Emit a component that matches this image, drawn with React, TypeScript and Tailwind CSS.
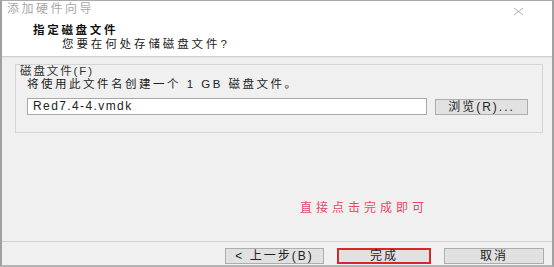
const font = { fontFamily: '"Liberation Sans", "Noto Sans CJK SC", sans-serif' };

const Btn = ({ label, className = "" }: { label: string; className?: string }) => (
  <button
    className={`h-[16px] bg-[#e1e1e1] border border-[#adadad] text-[12px] leading-[12px] tracking-[2px] text-[#222] flex items-center justify-center ${className}`}
  >
    {label}
  </button>
);

export default function App() {
  return (
    <div
      style={font}
      className="w-[554px] h-[267px] flex flex-col bg-[#f0f0f0] border-t border-l-2 border-r-2 border-b-2 border-t-[#a9a9a9] border-l-[#a0a0a0] border-r-[#a0a0a0] border-b-[#b4b4b4] overflow-hidden"
    >
      <div className="h-[56px] shrink-0 bg-white border-b border-[#cfcfcf] flex flex-col">
        <div className="flex justify-between items-start pl-[5px] pr-[28px] pt-[1px]">
          <span className="text-[12px] leading-[14px] tracking-[2.5px] text-[#a8a8a8]">添加硬件向导</span>
          <svg width="11" height="9" viewBox="0 0 11 9" className="mt-[5px]">
            <path d="M1 1 L10 8 M10 1 L1 8" stroke="#b0b0b0" strokeWidth="1" fill="none" />
          </svg>
        </div>
        <div className="pl-[31px] mt-[8px] text-[11.5px] leading-[13px] tracking-[2.7px] font-bold text-[#111]">
          指定磁盘文件
        </div>
        <div className="pl-[60px] mt-[1px] text-[11.5px] leading-[13px] tracking-[2.9px] text-[#222]">
          您要在何处存储磁盘文件?
        </div>
      </div>

      <div className="h-[184px] shrink-0 flex flex-col border-t border-[#e4e4e4]">
        <div className="ml-[13px] mt-[6px] w-[528px] h-[69px] border border-[#d5d5d5] flex flex-col">
          <div className="pl-[4px] text-[11.5px] leading-[12px] tracking-[1.9px] text-[#333]">磁盘文件(F)</div>
          <div className="pl-[11px] mt-[1px] text-[11.5px] leading-[12px] tracking-[2.5px] text-[#222]">
            将使用此文件名创建一个 1 GB 磁盘文件。
          </div>
          <div className="pl-[11px] mt-[8px] flex items-start gap-[8px]">
            <div className="w-[400px] h-[17px] bg-white border border-[#a8a8a8] pl-[5px] text-[12px] leading-[15px] tracking-[1.4px] text-[#222]">
              Red7.4-4.vmdk
            </div>
            <Btn label="浏览(R)..." className="w-[93px] mt-[1px]" />
          </div>
        </div>
        <div className="pl-[298px] mt-[68px] text-[12px] leading-[14px] tracking-[4px] text-[#e24a68]">
          直接点击完成即可
        </div>
      </div>

      <div className="flex-1 border-t border-[#d0d0d0] flex justify-end items-start pt-[6px] pr-[8px] gap-[13px]">
        <Btn label="< 上一步(B)" className="w-[99px]" />
        <Btn label="完成" className="w-[94px] border-2 border-[#d8262c]" />
        <Btn label="取消" className="w-[100px]" />
      </div>
    </div>
  );
}
